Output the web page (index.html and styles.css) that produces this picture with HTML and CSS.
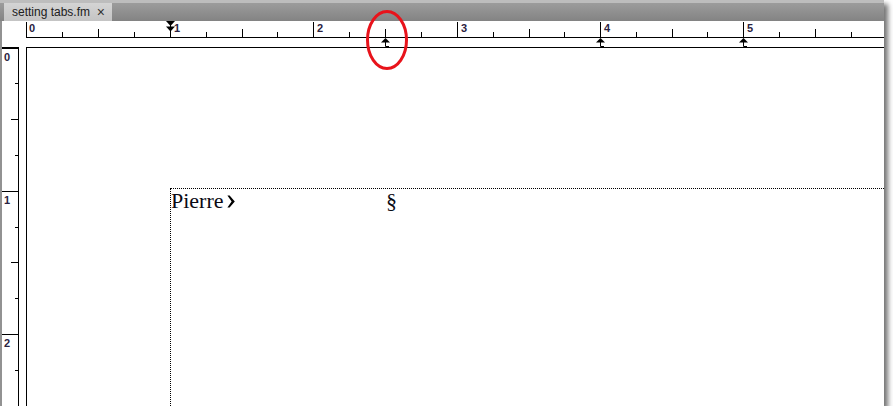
FILE: index.html
```html
<!DOCTYPE html>
<html lang="en">
<head>
    <meta charset="UTF-8">
    <meta name="viewport" content="width=device-width, initial-scale=1.0">
    <title>setting tabs.fm</title>
    <link rel="stylesheet" href="styles.css">
</head>
<body>
    <div class="window">
        <div class="tabbar">
            <div class="tab">
                <span>setting tabs.fm</span>
                <span class="close">×</span>
            </div>
        </div>

        <div class="workspace">
            <div class="corner"></div>

            <!-- horizontal ruler, 1 inch = ~143px -->
            <svg class="hruler" width="858" height="26" viewBox="0 0 858 26">
                <path class="rule" d="M0 16.5H858
                    M0.5 1V16M144.5 1V16M287.5 1V16M431.5 1V16M574.5 1V16M717.5 1V16
                    M72.5 8V16M216.5 8V16M359.5 8V16M503.5 8V16M646.5 8V16M789.5 8V16
                    M36.5 11V16M108.5 11V16M180.5 11V16M251.5 11V16M323.5 11V16M395.5 11V16
                    M467.5 11V16M538.5 11V16M610.5 11V16M681.5 11V16M753.5 11V16M825.5 11V16"/>
                <text class="num" x="3" y="11">0</text>
                <text class="num" x="148" y="11">1</text>
                <text class="num" x="291" y="11">2</text>
                <text class="num" x="435" y="11">3</text>
                <text class="num" x="578" y="11">4</text>
                <text class="num" x="721" y="11">5</text>
                <!-- indent marker -->
                <polygon class="mark" points="140,0 149,0 144.5,5"/>
                <polygon class="mark" points="140,5.5 149,5.5 144.5,10.5"/>
                <!-- left tab stops -->
                <polygon class="mark" points="359.5,17 355,21.5 364,21.5"/>
                <path class="rule" d="M359.5 21V25.5H363"/>
                <polygon class="mark" points="574.5,17 570,21.5 579,21.5"/>
                <path class="rule" d="M574.5 21V25.5H578"/>
                <polygon class="mark" points="717.5,17 713,21.5 722,21.5"/>
                <path class="rule" d="M717.5 21V25.5H721"/>
            </svg>

            <!-- vertical ruler -->
            <svg class="vruler" width="24" height="359" viewBox="0 0 24 359">
                <rect x="0" y="0" width="16" height="2"/>
                <path class="rule" d="M16.5 0V359
                    M0 144.5H16M0 287.5H16
                    M9 72.5H16M9 215.5H16
                    M13 36.5H16M13 108.5H16M13 180.5H16M13 251.5H16M13 323.5H16"/>
                <text class="num" x="2" y="13.5">0</text>
                <text class="num" x="2" y="157">1</text>
                <text class="num" x="2" y="300">2</text>
            </svg>

            <div class="page">
                <div class="frame">
                    <div class="text-line">
                        <span>Pierre<svg class="tab-sym" width="8" height="13" viewBox="0 0 8 13">
                            <path d="M0.4 0.5L4.6 6.5L0.4 12.5H2.6L7.8 6.5L2.6 0.5Z"/>
                        </svg></span>
                        <span>§</span>
                    </div>
                </div>
            </div>
        </div>

        <!-- callout around the tab stop -->
        <svg class="callout" width="46" height="62" viewBox="0 0 46 62">
            <ellipse cx="22" cy="30" rx="19.5" ry="28.5"/>
        </svg>
    </div>
</body>
</html>
```

FILE: styles.css
```css
body {
    margin: 0;
    background: #fff;
    font-family: "Liberation Sans", Arial, sans-serif;
}

.window {
    position: relative;
    width: 884px;
    height: 406px;
    background: #fff;
    box-shadow: 4px 4px 5px rgba(0, 0, 0, 0.55);
    display: flex;
    flex-direction: column;
}

.tabbar {
    height: 21px;
    flex: none;
    background: linear-gradient(#bdbdbd 0, #bdbdbd 3px, #9c9c9c 3px, #838383 100%);
    padding: 3px 0 0 4px;
    box-sizing: border-box;
}

.tab {
    width: 108px;
    height: 18px;
    box-sizing: border-box;
    padding: 0 7px 0 8px;
    display: flex;
    align-items: center;
    justify-content: space-between;
    background: linear-gradient(#d4d4d4, #c4c4c4);
    font-size: 12px;
    color: #202020;
}

.tab .close {
    font-size: 14px;
    color: #333;
}

.workspace {
    flex: 1;
    display: grid;
    grid-template-columns: 24px 1fr;
    grid-template-rows: 26px 1fr;
    border-left: 2px solid #929292;
    min-height: 0;
}

.hruler,
.vruler {
    display: block;
}

.rule {
    fill: none;
    stroke: #000;
    stroke-width: 1;
}

.mark,
.vruler rect {
    fill: #000;
}

.num {
    font-family: "Liberation Sans", Arial, sans-serif;
    font-size: 11px;
    font-weight: bold;
    fill: #2a2240;
}

.page {
    border-left: 1px solid #000;
    border-top: 1px solid #000;
    padding: 140px 0 0 143px;
    display: flex;
    flex-direction: column;
    min-height: 0;
}

.frame {
    flex: 1;
    border-top: 1px dotted #000;
    border-left: 1px dotted #000;
}

.text-line {
    display: grid;
    grid-template-columns: 215px auto;
    justify-content: start;
    font-family: "Liberation Serif", "Times New Roman", serif;
    font-size: 22px;
    line-height: 24px;
    color: #0a0a14;
}

.tab-sym {
    margin-left: 3px;
    fill: #000;
}

.callout {
    position: absolute;
    left: 365px;
    top: 10px;
}

.callout ellipse {
    fill: none;
    stroke: #e8131b;
    stroke-width: 3;
}
```
